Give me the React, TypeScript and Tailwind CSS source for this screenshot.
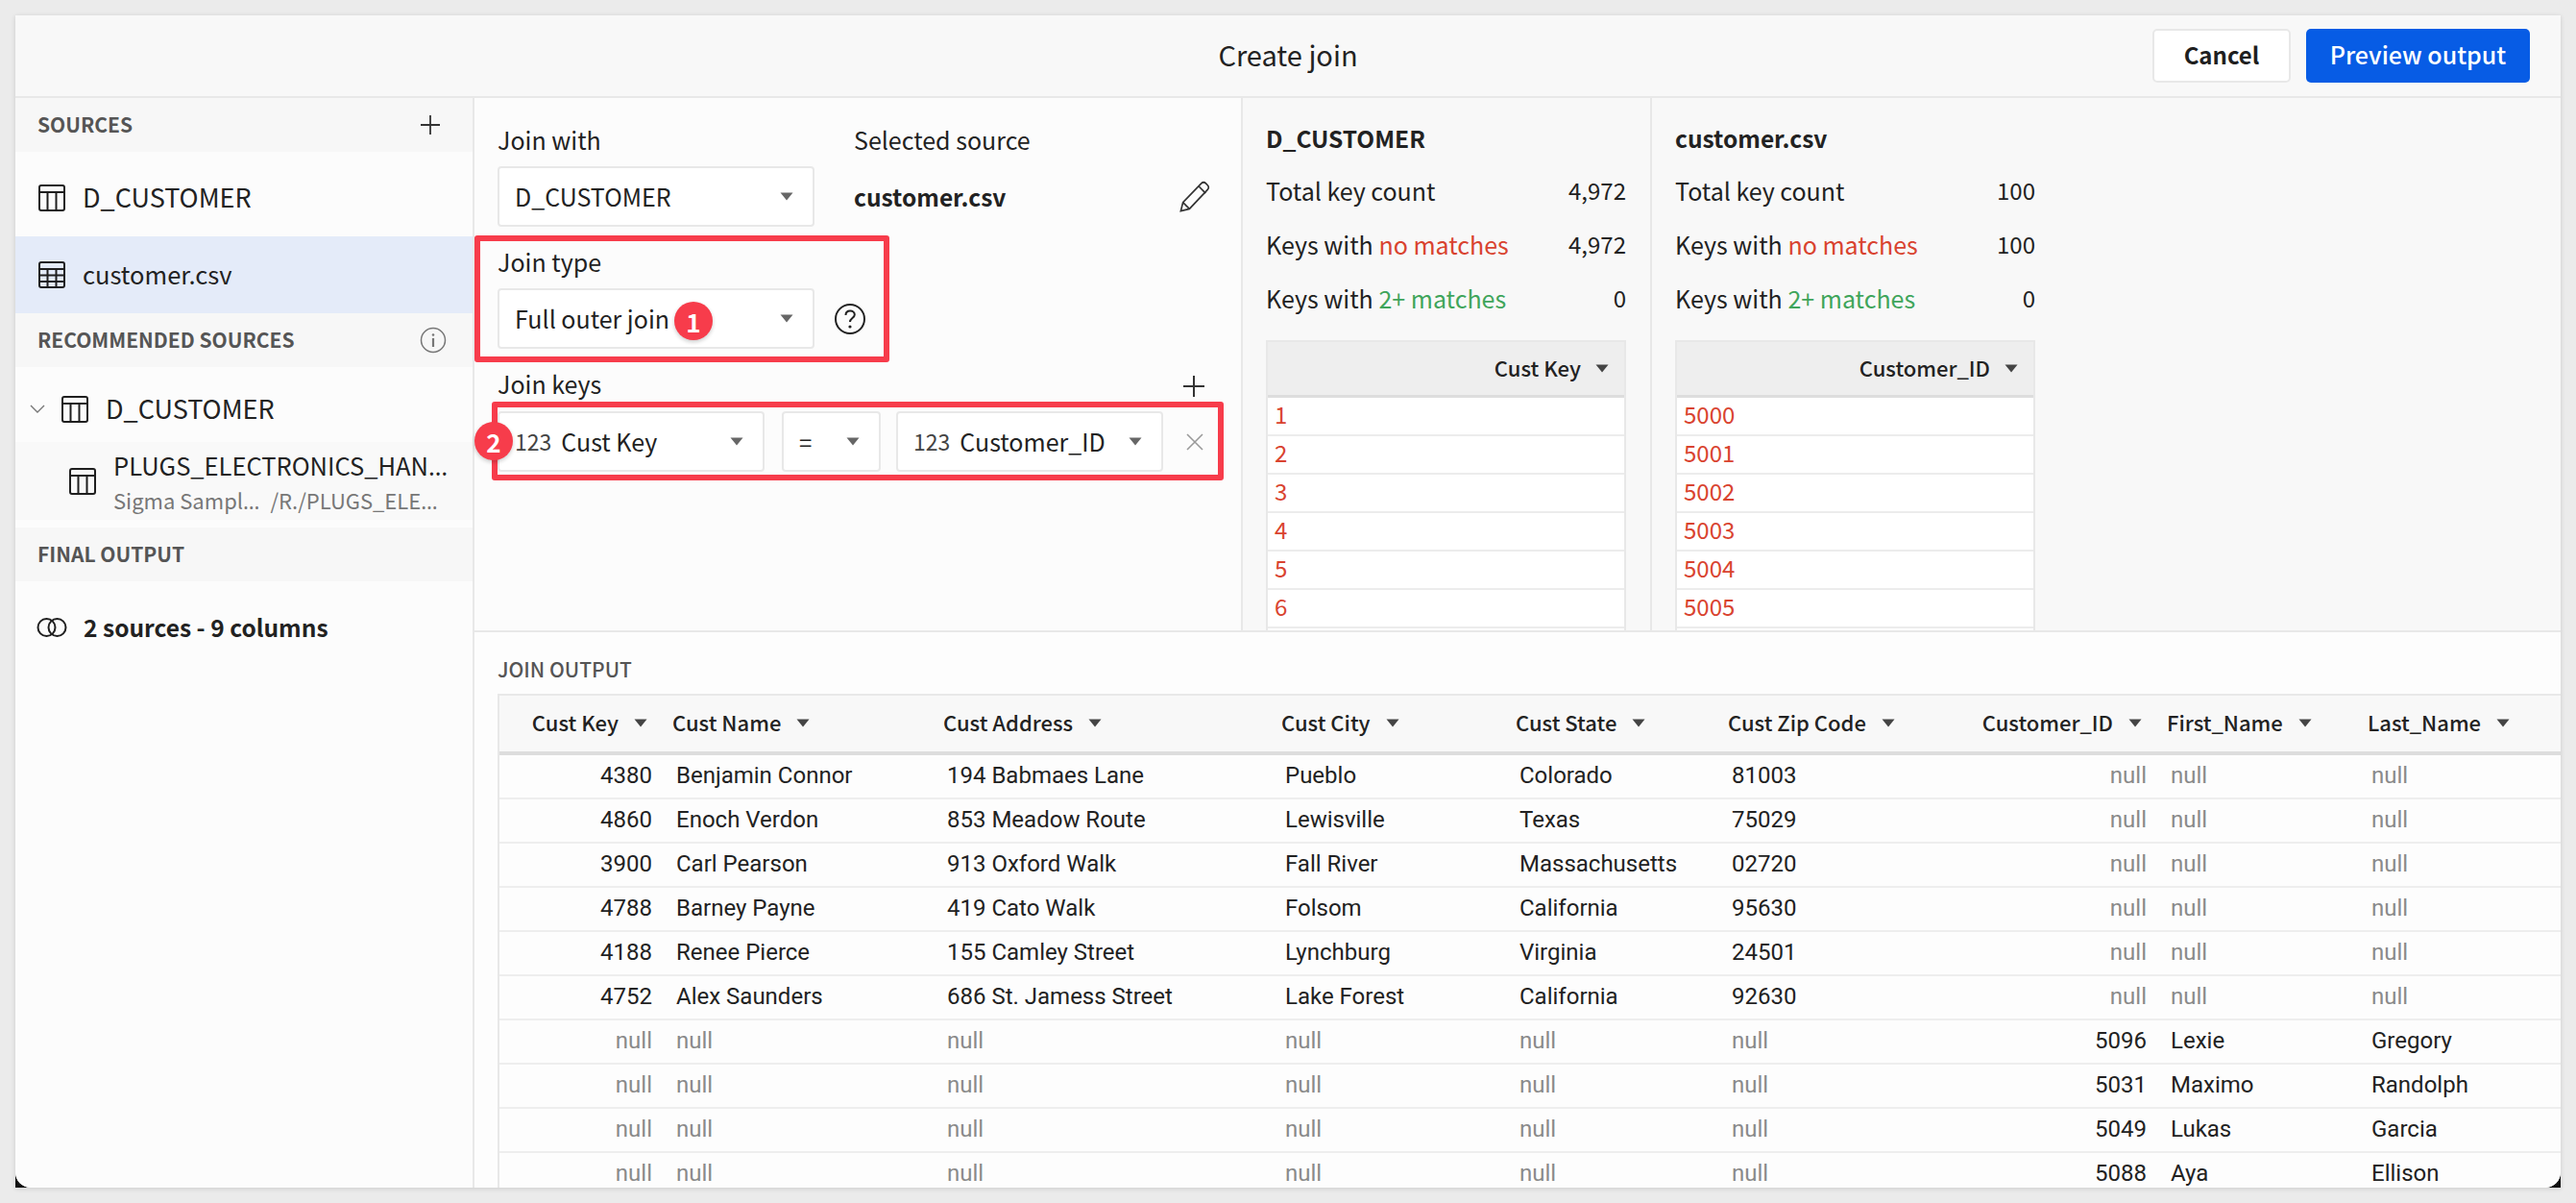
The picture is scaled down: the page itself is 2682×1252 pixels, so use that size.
import React from "react";

const UI = "font-['Noto_Sans_CJK_JP','Noto_Sans',sans-serif]";
const CELL = "font-['Roboto',sans-serif]";

function Caret({ className = "" }: { className?: string }) {
  return (
    <svg width="14" height="9" viewBox="0 0 14 9" className={`shrink-0 ${className}`}>
      <path d="M0.5 0.5h13L7 8.5z" fill="currentColor" />
    </svg>
  );
}

function TableIcon({ grid = false, className = "" }: { grid?: boolean; className?: string }) {
  return (
    <svg width="28" height="28" viewBox="0 0 28 28" fill="none" stroke="#1f1f1f" strokeWidth="2" className={`shrink-0 ${className}`}>
      <rect x="1" y="1" width="26" height="26" rx="2" />
      <path d="M1 8h26" />
      {grid ? <path d="M1 14.5h26M1 21h26M9.5 8v19M18.5 8v19" /> : <path d="M9.5 8v19M18.5 8v19" />}
    </svg>
  );
}

function Plus({ size = 20, className = "" }: { size?: number; className?: string }) {
  return (
    <svg width={size} height={size} viewBox="0 0 20 20" stroke="#333" strokeWidth="1.8" className={`shrink-0 ${className}`}>
      <path d="M10 0v20M0 10h20" />
    </svg>
  );
}

function SectionHead({ label, right }: { label: string; right?: React.ReactNode }) {
  return (
    <div className="h-[56px] bg-[#f7f7f7] flex items-center justify-between pl-[23px] pr-[34px] shrink-0">
      <span className="text-[21px] font-semibold text-[#555] pb-[1px]">{label}</span>
      {right}
    </div>
  );
}

function Select({ w, children }: { w: string; children: React.ReactNode }) {
  return (
    <div className={`${w} h-[63px] bg-white border-2 border-[#e8e8e8] rounded-[4px] flex items-center justify-between pl-[16px] pr-[20px] shrink-0 text-[25px] text-[#222]`}>
      <span className="flex items-center whitespace-nowrap">{children}</span>
      <Caret className="text-[#666]" />
    </div>
  );
}

function Badge({ n, className }: { n: number; className: string }) {
  return (
    <div className={`absolute w-[40px] h-[40px] rounded-full bg-[#f73c4b] text-white text-[26px] font-bold flex items-center justify-center shadow-[0_2px_4px_rgba(0,0,0,0.2)] ${className}`}>
      {n}
    </div>
  );
}

function StatRow({ label, value, mt }: { label: React.ReactNode; value: string; mt: string }) {
  return (
    <div className={`h-[36px] flex items-center justify-between text-[25px] text-[#222] ${mt}`}>
      <span>{label}</span>
      <span className="text-[24px] -translate-y-[1px]">{value}</span>
    </div>
  );
}

function KeyPanel({ title, total, col, rows, className }: { title: string; total: string; col: string; rows: string[]; className: string }) {
  return (
    <div className={`shrink-0 h-full overflow-hidden ${className}`}>
      <div className="w-[375px]">
        <div className="h-[36px] flex items-center text-[24.5px] font-semibold text-[#222]">{title}</div>
        <StatRow mt="mt-[19px]" label="Total key count" value={total} />
        <StatRow mt="mt-[20px]" label={<>Keys with <span className="text-[#d9432f]">no matches</span></>} value={total} />
        <StatRow mt="mt-[20px]" label={<>Keys with <span className="text-[#3fa55b]">2+ matches</span></>} value="0" />
        <div className="mt-[25px] border-x-2 border-t-2 border-[#e8e8e8]">
          <div className="h-[58px] bg-[#eeeeee] border-b-[3px] border-[#dddddd] flex items-center justify-end pr-[16px] gap-[15px] text-[22px] font-medium text-[#222]">
            <span className="pb-[2px]">{col}</span>
            <Caret className="text-[#444]" />
          </div>
          {rows.map((r) => (
            <div key={r} className="h-[40px] bg-white border-b-2 border-[#ececec] flex items-center pl-[7px] pb-[4px] text-[24px] text-[#d9432f]">{r}</div>
          ))}
          <div className="h-[40px] bg-white" />
        </div>
      </div>
    </div>
  );
}

const COLS = "grid grid-cols-[176px_282px_352px_244px_221px_255px_202px_209px_203px]";

const heads: [string, boolean][] = [
  ["Cust Key", true], ["Cust Name", false], ["Cust Address", false], ["Cust City", false], ["Cust State", false],
  ["Cust Zip Code", false], ["Customer_ID", true], ["First_Name", false], ["Last_Name", false],
];

const n = "null";
const data: string[][] = [
  ["4380", "Benjamin Connor", "194 Babmaes Lane", "Pueblo", "Colorado", "81003", n, n, n],
  ["4860", "Enoch Verdon", "853 Meadow Route", "Lewisville", "Texas", "75029", n, n, n],
  ["3900", "Carl Pearson", "913 Oxford Walk", "Fall River", "Massachusetts", "02720", n, n, n],
  ["4788", "Barney Payne", "419 Cato Walk", "Folsom", "California", "95630", n, n, n],
  ["4188", "Renee Pierce", "155 Camley Street", "Lynchburg", "Virginia", "24501", n, n, n],
  ["4752", "Alex Saunders", "686 St. Jamess Street", "Lake Forest", "California", "92630", n, n, n],
  [n, n, n, n, n, n, "5096", "Lexie", "Gregory"],
  [n, n, n, n, n, n, "5031", "Maximo", "Randolph"],
  [n, n, n, n, n, n, "5049", "Lukas", "Garcia"],
  [n, n, n, n, n, n, "5088", "Aya", "Ellison"],
];

const Dots = () => <span className="font-['Noto_Sans',sans-serif]">…</span>;

export default function App() {
  return (
    <div className={`w-[2682px] h-[1252px] bg-[#ebebeb] pl-[16px] pt-[16px] overflow-hidden ${UI}`}>
      <div className="w-[2650px] h-[1220px] bg-[#111111] shadow-[0_1px_5px_rgba(0,0,0,0.14)]">
        <div className="w-full h-full bg-[#f8f8f8] flex flex-col overflow-hidden rounded-b-[16px]">
          {/* Header */}
          <div className="h-[86px] shrink-0 border-b-2 border-[#e8e8e8] relative flex items-center justify-end pr-[32px] gap-[16px]">
            <div className="absolute inset-x-0 text-center text-[29px] text-[#222] -translate-y-[1px]">Create join</div>
            <button className="w-[144px] h-[56px] bg-white border-2 border-[#e8e8e8] rounded-[5px] text-[24px] font-semibold text-[#1f1f1f] relative pb-[3px]">Cancel</button>
            <button className="w-[233px] h-[56px] bg-[#075ce5] rounded-[5px] text-[25px] font-medium text-white relative pb-[3px]">Preview output</button>
          </div>
          {/* Body */}
          <div className="flex flex-1 min-h-0">
            {/* Sidebar */}
            <div className="w-[478px] shrink-0 border-r-2 border-[#e8e8e8] bg-[#fcfcfc] flex flex-col text-[#222]">
              <SectionHead label="SOURCES" right={<Plus />} />
              <div className="h-[88px] flex items-center pl-[24px] pt-[8px] gap-[18px] text-[27px]">
                <TableIcon />
                <span className="pb-[1px]">D_CUSTOMER</span>
              </div>
              <div className="h-[80px] bg-[#e4ebf9] flex items-center pl-[24px] gap-[18px] text-[25.5px]">
                <TableIcon grid />
                <span className="pb-[2px]">customer.csv</span>
              </div>
              <SectionHead
                label="RECOMMENDED SOURCES"
                right={
                  <svg width="28" height="28" viewBox="0 0 28 28" fill="none" stroke="#777" strokeWidth="1.5" className="shrink-0 -mr-[7px]">
                    <circle cx="14" cy="14" r="12.5" />
                    <path d="M14 12v9" strokeWidth="2.2" />
                    <circle cx="14" cy="8.5" r="1.3" fill="#777" stroke="none" />
                  </svg>
                }
              />
              <div className="h-[78px] flex items-center pl-[15px] pt-[10px] text-[27px]">
                <svg width="16" height="10" viewBox="0 0 16 10" fill="none" stroke="#777" strokeWidth="1.4" className="shrink-0 mr-[17px]">
                  <path d="M1 1l7 7 7-7" />
                </svg>
                <TableIcon className="mr-[18px]" />
                <span className="pb-[2px]">D_CUSTOMER</span>
              </div>
              <div className="h-[81px] bg-[#f9f9f9] flex items-center pl-[56px]">
                <TableIcon className="mr-[18px]" />
                <div className="min-w-0">
                  <div className="text-[25.5px] leading-[38px] whitespace-nowrap">PLUGS_ELECTRONICS_HAN<Dots /></div>
                  <div className="text-[22px] leading-[32px] text-[#777] flex gap-[11px] whitespace-nowrap">
                    <span>Sigma Sampl<Dots /></span>
                    <span>/R./PLUGS_ELE<Dots /></span>
                  </div>
                </div>
              </div>
              <div className="h-[8px] shrink-0" />
              <SectionHead label="FINAL OUTPUT" />
              <div className="h-[98px] flex items-center pl-[22px] pb-[2px] gap-[17px] text-[24.5px] font-semibold">
                <svg width="32" height="20" viewBox="0 0 32 20" fill="none" stroke="#1f1f1f" strokeWidth="2" className="shrink-0">
                  <circle cx="10.500" cy="10" r="9" />
                  <circle cx="21.500" cy="10" r="9" />
                </svg>
                <span>2 sources - 9 columns</span>
              </div>
            </div>
            {/* Main */}
            <div className="flex-1 min-w-0 flex flex-col">
              <div className="h-[556px] shrink-0 border-b-2 border-[#e8e8e8] flex">
                {/* Join config */}
                <div className="w-[800px] shrink-0 h-full bg-[#fcfcfc] border-r-2 border-[#e8e8e8] pl-[24px] pt-[25px] relative text-[25px] text-[#222]">
                  <div className="flex">
                    <div className="w-[371px] shrink-0">
                      <div className="h-[36px] leading-[36px]">Join with</div>
                      <div className="mt-[10px]"><Select w="w-[330px]">D_CUSTOMER</Select></div>
                    </div>
                    <div className="w-[371px] shrink-0">
                      <div className="h-[36px] leading-[36px]">Selected source</div>
                      <div className="mt-[10px] h-[63px] flex items-center justify-between font-semibold text-[24.5px]">
                        <span className="pt-[2px]">customer.csv</span>
                        <svg width="36" height="36" viewBox="0 0 32 32" fill="none" stroke="#333" strokeWidth="1.5" className="-mr-[2px]">
                          <path d="M3 29l2-8L22 3.500c1.200-1.200 3-1.200 4.200 0l1.600 1.600c1.200 1.200 1.200 3 0 4.200L11 27z" />
                          <path d="M5 21l6 6M19.500 6l6.500 6.500" />
                        </svg>
                      </div>
                    </div>
                  </div>
                  <div className="mt-[18px] h-[36px] leading-[36px]">Join type</div>
                  <div className="mt-[10px] flex items-center">
                    <Select w="w-[330px]">Full outer join</Select>
                    <svg width="34" height="34" viewBox="0 0 34 34" fill="none" stroke="#222" strokeWidth="2" className="ml-[20px]">
                      <circle cx="17" cy="17" r="15" />
                      <path d="M12.500 13c0-2.800 2-4.500 4.700-4.500s4.600 1.700 4.600 4c0 3.500-4.800 3.700-4.800 7.500" />
                      <circle cx="17" cy="25" r="1.600" fill="#222" stroke="none" />
                    </svg>
                  </div>
                  <div className="mt-[19px] h-[36px] flex items-center justify-between pr-[38px]">
                    <span>Join keys</span>
                    <Plus size={22} className="translate-y-[2px]" />
                  </div>
                  <div className="mt-[10px] flex items-center">
                    <Select w="w-[278px]">
                      <span className="text-[23px] text-[#444] mr-[10px]">123</span>Cust Key
                    </Select>
                    <div className="ml-[18px]"><Select w="w-[103px]"><span className="text-[24px]">=</span></Select></div>
                    <div className="ml-[16px]">
                      <Select w="w-[278px]">
                        <span className="text-[23px] text-[#444] mr-[10px]">123</span>Customer_ID
                      </Select>
                    </div>
                    <svg width="18" height="18" viewBox="0 0 18 18" stroke="#999" strokeWidth="1.6" className="ml-[24px]">
                      <path d="M1 1l16 16M17 1L1 17" />
                    </svg>
                  </div>
                  {/* Callouts */}
                  <div className="absolute left-[0px] top-[143px] w-[432px] h-[132px] border-[6px] border-[#f73c4b] rounded-[3px] pointer-events-none" />
                  <div className="absolute left-[18px] top-[316px] w-[762px] h-[82px] border-[6px] border-[#f73c4b] rounded-[3px] pointer-events-none" />
                  <Badge n={1} className="left-[208px] top-[212px]" />
                  <Badge n={2} className="left-[0px] top-[337px]" />
                </div>
                {/* Key panels */}
                <KeyPanel
                  title="D_CUSTOMER"
                  total="4,972"
                  col="Cust Key"
                  rows={["1", "2", "3", "4", "5", "6"]}
                  className="w-[426px] pl-[24px] pt-[24px] border-r-2 border-[#e8e8e8]"
                />
                <KeyPanel
                  title="customer.csv"
                  total="100"
                  col="Customer_ID"
                  rows={["5000", "5001", "5002", "5003", "5004", "5005"]}
                  className="pl-[24px] pt-[24px]"
                />
              </div>
              {/* Output */}
              <div className="flex-1 min-h-0 bg-[#fdfdfd] pl-[24px] overflow-hidden">
                <div className="h-[64px] flex items-center pt-[14px] text-[21px] font-medium text-[#555]">JOIN OUTPUT</div>
                <div className="border-l-2 border-t-2 border-[#e8e8e8]">
                  <div className={`${COLS} h-[62px] bg-[#f8f8f8] border-b-[4px] border-[#dddddd] text-[22px] font-medium text-[#222]`}>
                    {heads.map(([h, right]) => (
                      <div key={h} className={`flex items-center gap-[16px] whitespace-nowrap pb-[2px] ${right ? "justify-end pr-[22px]" : "pl-[4px]"}`}>
                        <span className="pb-[2px]">{h}</span>
                        <Caret className="text-[#444]" />
                      </div>
                    ))}
                  </div>
                  {data.map((row, i) => (
                    <div key={i} className={`${COLS} h-[46px] border-b-2 border-[#eeeeee] text-[24px] ${CELL}`}>
                      {row.map((c, j) => {
                        const right = j === 0 || j === 6;
                        return (
                          <div key={j} className={`flex items-center whitespace-nowrap pb-[2px] ${right ? "justify-end pr-[17px]" : "pl-[8px]"} ${c === n ? "text-[#8a8a8a]" : "text-[#222]"}`}>
                            {c}
                          </div>
                        );
                      })}
                    </div>
                  ))}
                </div>
              </div>
            </div>
          </div>
        </div>
      </div>
    </div>
  );
}
